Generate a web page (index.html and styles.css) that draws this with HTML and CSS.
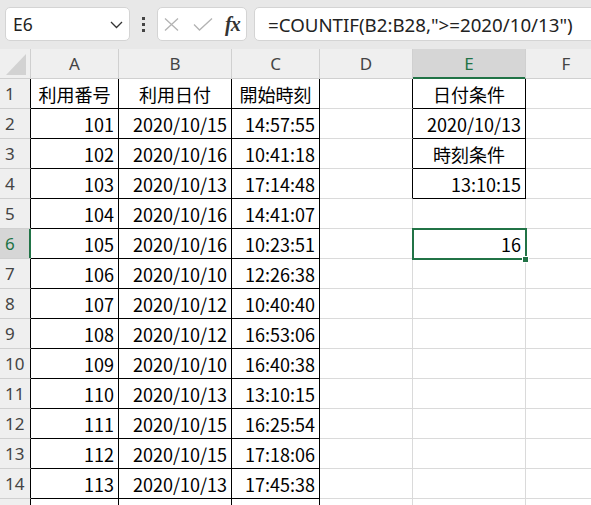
FILE: index.html
```html
<!DOCTYPE html>
<html lang="ja">
<head>
<meta charset="utf-8">
<title>COUNTIF</title>
<link rel="stylesheet" href="styles.css">
</head>
<body>
<div class="toolbar">
  <div class="namebox">
    <span class="name">E6</span>
    <svg class="chev" width="13" height="8" viewBox="0 0 13 8"><path d="M1 1 L6.5 6.5 L12 1" fill="none" stroke="#333" stroke-width="1.3"/></svg>
  </div>
  <div class="dots"><i></i><i></i><i></i></div>
  <div class="fxbox">
    <svg width="15" height="13" viewBox="0 0 15 13"><path d="M1 0.5 L14 12.5 M14 0.5 L1 12.5" stroke="#b3b3b3" stroke-width="1.3" fill="none"/></svg>
    <svg width="20" height="13" viewBox="0 0 20 13"><path d="M1 6.5 L6.5 12 L19 0.5" stroke="#b3b3b3" stroke-width="1.3" fill="none"/></svg>
    <span class="fx">fx</span>
  </div>
  <div class="formula">=COUNTIF(B2:B28,"&gt;=2020/10/13")</div>
</div>
<div class="sheet">
  <div class="corner"><span class="tri"></span></div>
  <div class="ch">A</div><div class="ch">B</div><div class="ch">C</div><div class="ch">D</div><div class="ch sel">E</div><div class="ch last">F</div>

  <div class="rh tb">1</div><div class="c tb ctr">利用番号</div><div class="c tb ctr">利用日付</div><div class="c tb ctr">開始時刻</div><div class="c tbr"></div><div class="c tb ctr">日付条件</div><div class="c last"></div>
  <div class="rh tb">2</div><div class="c tb">101</div><div class="c tb">2020/10/15</div><div class="c tb">14:57:55</div><div class="c tbr"></div><div class="c tb">2020/10/13</div><div class="c last"></div>
  <div class="rh tb">3</div><div class="c tb">102</div><div class="c tb">2020/10/16</div><div class="c tb">10:41:18</div><div class="c tbr"></div><div class="c tb ctr">時刻条件</div><div class="c last"></div>
  <div class="rh tb">4</div><div class="c tb">103</div><div class="c tb">2020/10/13</div><div class="c tb">17:14:48</div><div class="c tbr"></div><div class="c tb">13:10:15</div><div class="c last"></div>
  <div class="rh tb">5</div><div class="c tb">104</div><div class="c tb">2020/10/16</div><div class="c tb">14:41:07</div><div class="c"></div><div class="c"></div><div class="c last"></div>
  <div class="rh tb sel">6</div><div class="c tb">105</div><div class="c tb">2020/10/16</div><div class="c tb">10:23:51</div><div class="c"></div><div class="c active">16</div><div class="c last"></div>
  <div class="rh tb">7</div><div class="c tb">106</div><div class="c tb">2020/10/10</div><div class="c tb">12:26:38</div><div class="c"></div><div class="c"></div><div class="c last"></div>
  <div class="rh tb">8</div><div class="c tb">107</div><div class="c tb">2020/10/12</div><div class="c tb">10:40:40</div><div class="c"></div><div class="c"></div><div class="c last"></div>
  <div class="rh tb">9</div><div class="c tb">108</div><div class="c tb">2020/10/12</div><div class="c tb">16:53:06</div><div class="c"></div><div class="c"></div><div class="c last"></div>
  <div class="rh tb">10</div><div class="c tb">109</div><div class="c tb">2020/10/10</div><div class="c tb">16:40:38</div><div class="c"></div><div class="c"></div><div class="c last"></div>
  <div class="rh tb">11</div><div class="c tb">110</div><div class="c tb">2020/10/13</div><div class="c tb">13:10:15</div><div class="c"></div><div class="c"></div><div class="c last"></div>
  <div class="rh tb">12</div><div class="c tb">111</div><div class="c tb">2020/10/15</div><div class="c tb">16:25:54</div><div class="c"></div><div class="c"></div><div class="c last"></div>
  <div class="rh tb">13</div><div class="c tb">112</div><div class="c tb">2020/10/15</div><div class="c tb">17:18:06</div><div class="c"></div><div class="c"></div><div class="c last"></div>
  <div class="rh tb">14</div><div class="c tb">113</div><div class="c tb">2020/10/13</div><div class="c tb">17:45:38</div><div class="c"></div><div class="c"></div><div class="c last"></div>
  <div class="rh tb"></div><div class="c tb"></div><div class="c tb"></div><div class="c tb"></div><div class="c"></div><div class="c"></div><div class="c last"></div>
</div>
</body>
</html>
```

FILE: styles.css
```css
html, body {
  margin: 0;
  padding: 0;
  background: #ffffff;
}
body {
  width: 591px;
  height: 505px;
  overflow: hidden;
  font-family: "Noto Sans CJK JP", "Noto Sans", sans-serif;
}

.toolbar {
  display: flex;
  align-items: flex-start;
  height: 49px;
  box-sizing: border-box;
  padding: 7px 0 0 5px;
  background: #e8e8e8;
}
.namebox {
  width: 125px;
  height: 34px;
  box-sizing: border-box;
  background: #ffffff;
  border: 1px solid #d4d4d4;
  border-radius: 5px;
  display: flex;
  align-items: center;
  justify-content: space-between;
  padding: 0 6px 0 7px;
}
.name {
  font-family: "Noto Sans", sans-serif;
  font-size: 17.5px;
  color: #222;
}
.chev {
  margin-top: 1px;
}
.dots {
  width: 27px;
  height: 34px;
  display: flex;
  flex-direction: column;
  align-items: center;
  justify-content: center;
  gap: 3px;
}
.dots i {
  display: block;
  width: 3px;
  height: 3px;
  background: #444;
}
.fxbox {
  width: 90px;
  height: 34px;
  box-sizing: border-box;
  background: #ffffff;
  border: 1px solid #d4d4d4;
  border-radius: 5px;
  display: flex;
  align-items: center;
  padding: 0 6px 0 6px;
  gap: 14px;
}
.fx {
  font-family: "Liberation Serif", serif;
  font-style: italic;
  font-weight: bold;
  font-size: 20px;
  color: #333;
  letter-spacing: -1px;
  margin-left: -2px;
}
.formula {
  flex: 1;
  height: 34px;
  margin-left: 7px;
  margin-right: -10px;
  box-sizing: border-box;
  background: #ffffff;
  border: 1px solid #d4d4d4;
  border-radius: 5px;
  padding: 0 0 0 13px;
  display: flex;
  align-items: center;
  font-family: "Noto Sans", sans-serif;
  font-size: 18.7px;
  color: #222;
  white-space: nowrap;
}

.sheet {
  display: grid;
  grid-template-columns: 31px 88px 113px 88px 93px 113px 80px;
  grid-auto-rows: 30px;
}
.sheet > div {
  box-sizing: border-box;
  border-right: 1px solid #dadada;
  border-bottom: 1px solid #dadada;
  white-space: nowrap;
  overflow: hidden;
}
.corner {
  background: #efefef;
  position: relative;
  border-color: #cfcfcf !important;
}
.tri {
  position: absolute;
  right: 4px;
  bottom: 3px;
  width: 0;
  height: 0;
  border-left: 20px solid transparent;
  border-bottom: 21px solid #d2d2d2;
}
.ch {
  background: #efefef;
  border-color: #d0d0d0 !important;
  display: flex;
  align-items: center;
  justify-content: center;
  font-family: "Noto Sans", sans-serif;
  font-size: 17px;
  color: #444;
}
.ch.sel {
  background: #d6d6d6;
  color: #217346;
  border-bottom-color: #217346 !important;
  box-shadow: inset 0 -1px 0 #217346;
}
.rh {
  background: #efefef;
  border-bottom-color: #d0d0d0 !important;
  display: flex;
  align-items: center;
  padding-left: 5px;
  font-family: "Noto Sans", sans-serif;
  font-size: 17px;
  color: #444;
}
.rh.tb {
  border-right-color: #000;
}
.rh.sel {
  background: #d6d6d6;
  color: #217346;
  border-right-color: #217346;
  box-shadow: inset -1px 0 0 #217346;
}
.c {
  display: flex;
  align-items: center;
  justify-content: flex-end;
  padding-right: 4px;
  font-size: 18px;
  color: #000;
}
.c.ctr {
  justify-content: center;
  padding-right: 0;
}
.c.tb {
  border-right-color: #000;
  border-bottom-color: #000;
}
.c.tbr {
  border-right-color: #000;
}
.sheet > .last {
  border-right: none;
}
.sheet > div.active {
  position: relative;
  overflow: visible;
}
.active::after {
  content: "";
  position: absolute;
  left: -1px;
  top: -1px;
  right: -2px;
  bottom: -2px;
  border: 2px solid #217346;
}
.active::before {
  content: "";
  position: absolute;
  right: -3px;
  bottom: -4px;
  width: 5px;
  height: 5px;
  background: #217346;
  outline: 1px solid #ffffff;
  z-index: 1;
}
```
